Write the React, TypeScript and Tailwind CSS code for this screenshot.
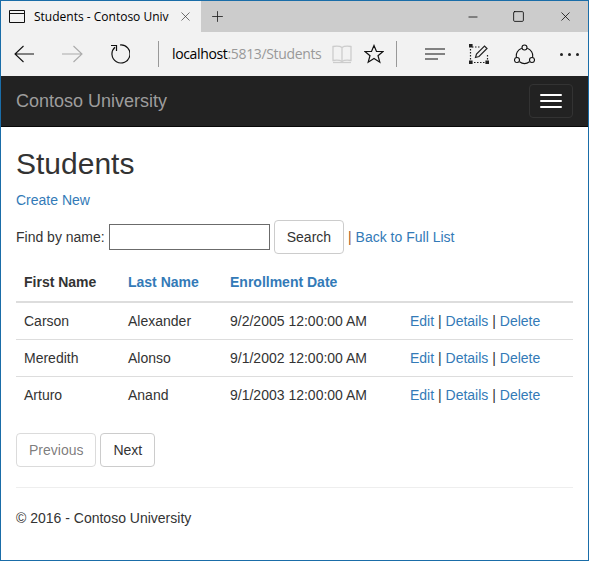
import { Minus, Plus, Square, X } from 'lucide-react'

const STUDENTS = [
  { first: 'Carson', last: 'Alexander', date: '9/2/2005 12:00:00 AM' },
  { first: 'Meredith', last: 'Alonso', date: '9/1/2002 12:00:00 AM' },
  { first: 'Arturo', last: 'Anand', date: '9/1/2003 12:00:00 AM' },
]

const LINK = 'text-[#337ab7]'

function RowActions() {
  return (
    <>
      <a className={LINK}>Edit</a> | <a className={LINK}>Details</a> | <a className={LINK}>Delete</a>
    </>
  )
}

function Toolbar() {
  return (
    <div className="h-[44px] bg-[#f2f2f2] flex items-center text-black">
      {/* Back / forward / refresh */}
      <svg className="ml-[13px] w-[21px] h-[18px]" viewBox="0 0 21 18" fill="none" stroke="#111" strokeWidth="1.1">
        <path d="M1 9h19M9.5 1 1 9l8.500 8" />
      </svg>
      <svg className="ml-[27px] w-[21px] h-[18px]" viewBox="0 0 21 18" fill="none" stroke="#aaa" strokeWidth="1.1">
        <path d="M0 9h19M11.500 1 20 9l-8.500 8" />
      </svg>
      <svg className="ml-[27px] w-[20px] h-[20px]" viewBox="0 0 20 20" fill="none" stroke="#111" strokeWidth="1.2">
        <path d="M5 3.200A9 9 0 1 0 10 1" />
        <path d="M1 1.500h5.500V7" />
      </svg>
      <div className="ml-[28px] w-px h-[26px] bg-[#999]" />
      <div className="ml-[13px] text-[14px] leading-none font-['Open_Sans',sans-serif] tracking-[-0.35px]">
        localhost<span className="text-[#999]">:5813/Students</span>
      </div>
      {/* Reading view, favourites */}
      <svg className="ml-[11px] w-[20px] h-[19px]" viewBox="0 0 20 19" fill="none" stroke="#ccc" strokeWidth="1.3">
        <path d="M10 2.500C8 1 4 1 1 1.500v14c3-.5 7-.5 9 1 2-1.500 6-1.500 9-1v-14C16 1 12 1 10 2.500Zm0 0v14" />
        <path d="M1 17.500h18" />
      </svg>
      <svg className="ml-[12px] w-[20px] h-[20px]" viewBox="0 0 20 20" fill="none" stroke="#111" strokeWidth="1.2">
        <path d="m10 1.500 2.500 6h6.500l-5 4.200 1.800 6.500-5.800-3.700-5.800 3.700 1.800-6.500-5-4.200h6.500Z" />
      </svg>
      <div className="ml-[12px] w-px h-[26px] bg-[#999]" />
      {/* Hub, note, share, more */}
      <svg className="ml-[28px] w-[21px] h-[12px]" viewBox="0 0 21 12" fill="none" stroke="#111" strokeWidth="1.1">
        <path d="M0 1h20M0 6h20M0 11h13" />
      </svg>
      <svg className="ml-[23px] w-[20px] h-[20px]" viewBox="0 0 20 20" fill="none" stroke="#222" strokeWidth="1.2">
        <path d="M3 3h8M1.500 5v12M5 18.500h12M18.500 11v6" strokeDasharray="1.500 1.500" />
        <path d="M6.500 13.500 7.500 10 15.500 2l2.500 2.500-8 8Z" />
        <path d="M0 0h3v3H0zM0 17h3v3H0zM17 17h3v3h-3z" fill="#222" />
      </svg>
      <svg className="ml-[25px] w-[21px] h-[21px]" viewBox="0 0 21 21" fill="none" stroke="#111" strokeWidth="1.1">
        <circle cx="10.500" cy="3.500" r="2.500" />
        <circle cx="3" cy="16" r="2.500" />
        <circle cx="18" cy="16" r="2.500" />
        <path d="M7.800 4.200A8 8 0 0 0 2.500 13.500M13.200 4.200A8 8 0 0 1 18.500 13.500M5.500 17.800a8.500 8.500 0 0 0 10 0" />
      </svg>
      <div className="ml-[25px] flex gap-[5px]">
        <span className="w-[3px] h-[3px] bg-[#222] rounded-full" />
        <span className="w-[3px] h-[3px] bg-[#222] rounded-full" />
        <span className="w-[3px] h-[3px] bg-[#222] rounded-full" />
      </div>
    </div>
  )
}

export default function App() {
  return (
    <div className="w-[589px] h-[561px] border border-[#1a6da8] bg-white overflow-hidden font-['Liberation_Sans',Arial,sans-serif] text-[14px] text-[#333] flex flex-col">
      {/* Tab strip */}
      <div className="h-[31px] bg-[#cccccc] flex items-stretch text-black shrink-0">
        <div className="w-[200px] bg-[#f2f2f2] flex items-center">
          <svg className="ml-[8px] w-[17px] h-[14px]" viewBox="0 0 17 14" fill="none" stroke="#111" strokeWidth="1">
            <path d="M.5.500h15v12H.5zM.5 3.500h15" />
          </svg>
          <div className="ml-[8px] w-[135px] overflow-hidden whitespace-nowrap text-[12px] font-['Open_Sans',sans-serif]">
            Students - Contoso University
          </div>
          <X className="ml-[9px] w-[15px] h-[15px] text-[#333]" strokeWidth={1.1} />
        </div>
        <div className="ml-[8px] flex items-center">
          <Plus className="w-[17px] h-[17px] text-[#222]" strokeWidth={1.2} />
        </div>
        <div className="ml-auto flex items-center">
          <Minus className="w-[14px] h-[14px] text-black mr-[32px]" strokeWidth={1.3} />
          <Square className="w-[13px] h-[13px] text-black mr-[33px]" strokeWidth={1.5} absoluteStrokeWidth />
          <X className="w-[15px] h-[15px] text-black mr-[15px]" strokeWidth={1.2} />
        </div>
      </div>

      <div className="shrink-0">
        <Toolbar />
      </div>

      {/* Site navbar */}
      <div className="h-[51px] shrink-0 bg-[#222] border-b border-[#080808] flex items-center justify-between pl-[15px] pr-[15px]">
        <span className="text-[18px] text-[#9d9d9d]">Contoso University</span>
        <button className="w-[44px] h-[34px] border border-[#333] rounded flex flex-col items-center justify-center gap-[4px]">
          <span className="w-[22px] h-[2px] bg-white rounded-[1px]" />
          <span className="w-[22px] h-[2px] bg-white rounded-[1px]" />
          <span className="w-[22px] h-[2px] bg-white rounded-[1px]" />
        </button>
      </div>

      {/* Page body */}
      <div className="px-[15px] flex-1">
        <h2 className="mt-[20px] mb-[10px] text-[30px] leading-[33px] font-medium">Students</h2>
        <p className="mb-[10px] leading-[20px]">
          <a className={LINK}>Create New</a>
        </p>
        <div className="flex items-center h-[34px] leading-[20px]">
          <span>Find by name:</span>
          <input className="ml-[4px] w-[161px] h-[26px] border border-[#6b6b6b] bg-white" />
          <button className="ml-[4px] h-[34px] px-[12px] border border-[#ccc] rounded bg-white text-[#333]">Search</button>
          <span className="ml-[4px] text-[#333]">
            <span className="text-[#a05a20]">|</span> <a className={LINK}>Back to Full List</a>
          </span>
        </div>

        <table className="w-full mt-[10px] border-collapse mb-[20px]">
          <thead>
            <tr className="border-b-2 border-[#ddd] text-left">
              <th className="w-[104px] p-[8px] h-[37px] font-bold">First Name</th>
              <th className={`w-[102px] p-[8px] font-bold ${LINK}`}>Last Name</th>
              <th className={`w-[180px] p-[8px] font-bold ${LINK}`}>Enrollment Date</th>
              <th className="p-[8px]" />
            </tr>
          </thead>
          <tbody>
            {STUDENTS.map((s, i) => (
              <tr key={s.first} className={i > 0 ? 'border-t border-[#ddd]' : ''}>
                <td className="p-[8px] leading-[20px]">{s.first}</td>
                <td className="p-[8px] leading-[20px]">{s.last}</td>
                <td className="p-[8px] leading-[20px]">{s.date}</td>
                <td className="p-[8px] leading-[20px]">
                  <RowActions />
                </td>
              </tr>
            ))}
          </tbody>
        </table>

        <div className="flex gap-[4px]">
          <button className="h-[34px] px-[12px] border border-[#ccc]/70 rounded text-[#333]/65">Previous</button>
          <button className="h-[34px] px-[12px] border border-[#ccc] rounded text-[#333]">Next</button>
        </div>

        <hr className="mt-[20px] border-t border-[#eee]" />
        <p className="mt-[20px] leading-[20px]">© 2016 - Contoso University</p>
      </div>
    </div>
  )
}
